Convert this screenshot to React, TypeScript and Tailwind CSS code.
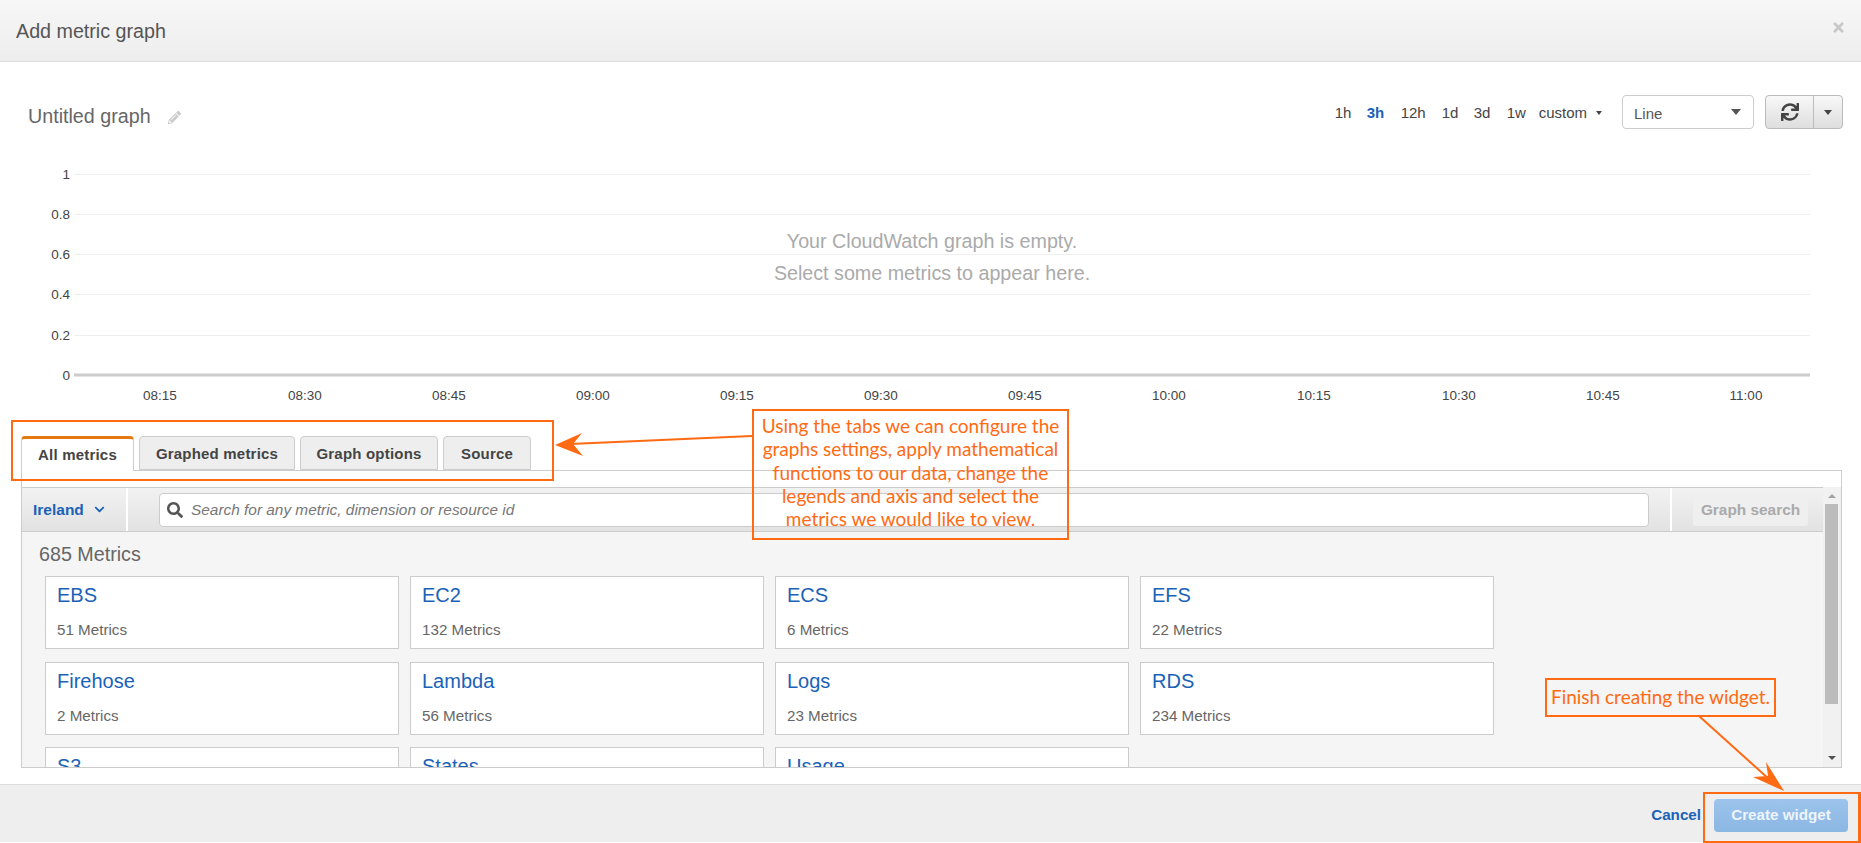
import { FaChevronDown, FaPencilAlt, FaSearch, FaSync, FaTimes } from "react-icons/fa";

const yLabels = [
  { label: "1", y: 174 },
  { label: "0.8", y: 214 },
  { label: "0.6", y: 254 },
  { label: "0.4", y: 294 },
  { label: "0.2", y: 335 },
];

const xLabels = [
  { label: "08:15", x: 160 },
  { label: "08:30", x: 305 },
  { label: "08:45", x: 449 },
  { label: "09:00", x: 593 },
  { label: "09:15", x: 737 },
  { label: "09:30", x: 881 },
  { label: "09:45", x: 1025 },
  { label: "10:00", x: 1169 },
  { label: "10:15", x: 1314 },
  { label: "10:30", x: 1459 },
  { label: "10:45", x: 1603 },
  { label: "11:00", x: 1746 },
];

const ranges = [
  { label: "1h", cls: "w-[32px]" },
  { label: "3h", cls: "w-[34px] font-bold text-[#1a62b8]" },
  { label: "12h", cls: "w-[41px]" },
  { label: "1d", cls: "w-[32px]" },
  { label: "3d", cls: "w-[33px]" },
  { label: "1w", cls: "w-[32px]" },
];

const tabs = [
  { label: "All metrics", cls: "w-[113px] h-[35px] bg-white border-[#ccc] border-b-0 border-t-[3px] border-t-[#e47911] -mb-px" },
  { label: "Graphed metrics", cls: "w-[156px] h-[34px] pt-[2px] bg-[#eee] border-[#ccc]" },
  { label: "Graph options", cls: "w-[138px] h-[34px] pt-[2px] bg-[#eee] border-[#ccc]" },
  { label: "Source", cls: "w-[88px] h-[34px] pt-[2px] bg-[#eee] border-[#ccc]" },
];

const cards = [
  { name: "EBS", count: "51 Metrics" },
  { name: "EC2", count: "132 Metrics" },
  { name: "ECS", count: "6 Metrics" },
  { name: "EFS", count: "22 Metrics" },
  { name: "Firehose", count: "2 Metrics" },
  { name: "Lambda", count: "56 Metrics" },
  { name: "Logs", count: "23 Metrics" },
  { name: "RDS", count: "234 Metrics" },
  { name: "S3", count: "9 Metrics" },
  { name: "States", count: "14 Metrics" },
  { name: "Usage", count: "8 Metrics" },
];

function Chart() {
  return (
    <svg width="1861" height="261" viewBox="0 150 1861 261" className="block">
      {yLabels.map((t) => (
        <g key={t.label}>
          <line x1="74" x2="1810" y1={t.y + 0.5} y2={t.y + 0.5} stroke="#eeeeee" />
          <text x="70" y={t.y + 5} textAnchor="end" fontSize="13.5" fill="#444">
            {t.label}
          </text>
        </g>
      ))}
      <line x1="74" x2="1810" y1="375" y2="375" stroke="#cccccc" strokeWidth="3" />
      <text x="70" y="380" textAnchor="end" fontSize="13.5" fill="#444">
        0
      </text>
      {xLabels.map((t) => (
        <text key={t.label} x={t.x} y="400" textAnchor="middle" fontSize="13.5" fill="#444">
          {t.label}
        </text>
      ))}
      <text x="932" y="248" textAnchor="middle" fontSize="19.7" fill="#aaaaaa">
        Your CloudWatch graph is empty.
      </text>
      <text x="932" y="280" textAnchor="middle" fontSize="19.7" fill="#aaaaaa">
        Select some metrics to appear here.
      </text>
    </svg>
  );
}

function Annotations() {
  return (
    <>
      <div className="absolute left-[11px] top-[420px] w-[543px] h-[61px] border-2 border-[#ff6a13]" />
      <div className="absolute left-[752px] top-[409px] w-[317px] h-[131px] border-2 border-[#ff6a13] text-center text-[#ff6a13] text-[19px] leading-[23.3px] font-['Lato',sans-serif] pt-[3px] whitespace-nowrap">
        Using the tabs we can configure the
        <br />
        graphs settings, apply mathematical
        <br />
        functions to our data, change the
        <br />
        legends and axis and select the
        <br />
        metrics we would like to view.
      </div>
      <div className="absolute left-[1545px] top-[678px] w-[231px] h-[39px] border-2 border-[#ff6a13] text-center text-[#ff6a13] text-[19px] leading-[33px] font-['Lato',sans-serif] whitespace-nowrap">
        Finish creating the widget.
      </div>
      <div className="absolute left-[1703px] top-[792px] w-[158px] h-[51px] border-2 border-r-[3px] border-[#ff6a13]" />
      <svg width="1861" height="843" className="absolute left-0 top-0 pointer-events-none">
        <line x1="752" y1="436" x2="570" y2="444" stroke="#ff6a13" strokeWidth="2" />
        <polygon points="555,445 582,433 573,444 583,456" fill="#ff6a13" />
        <line x1="1699" y1="716" x2="1770" y2="780" stroke="#ff6a13" strokeWidth="2" />
        <polygon points="1784,791 1753,777 1768,776 1766,762" fill="#ff6a13" />
      </svg>
    </>
  );
}

export default function App() {
  return (
    <div className="relative w-[1861px] h-[843px] overflow-hidden bg-white font-['Liberation_Sans',Arial,sans-serif] text-[#444]">
      {/* header */}
      <div className="h-[62px] flex items-center justify-between pl-4 pr-[15px] pt-[2px] border-b border-[#ddd] bg-gradient-to-b from-[#f7f7f7] to-[#ededed]">
        <h1 className="text-[19.7px] text-[#555]">Add metric graph</h1>
        <FaTimes className="text-[#c8c8c8] text-[15px] mb-[8px]" />
      </div>

      {/* graph title + range controls */}
      <div className="h-[88px] flex items-start justify-between pl-[28px] pr-[18px] pt-[32px]">
        <div className="flex items-center mt-[10px]">
          <span className="text-[19.7px] leading-[24px] text-[#666]">Untitled graph</span>
          <FaPencilAlt className="ml-[17px] text-[#ccc] text-[13px] mt-[2px]" />
        </div>
        <div className="flex items-center">
          <div className="flex items-center text-[15px] text-[#444] h-[34px] mt-[2px] mr-[1px]">
            {ranges.map((r) => (
              <span key={r.label} className={r.cls}>
                {r.label}
              </span>
            ))}
            <span>custom</span>
            <span className="ml-[9px] w-0 h-0 border-x-[3.5px] border-x-transparent border-t-[4px] border-t-[#444]" />
          </div>
          <div className="ml-[19px] w-[132px] h-[34px] border border-[#ccc] rounded-[4px] flex items-center justify-between pl-[11px] pr-[12px] text-[15px] text-[#555]">
            <span className="mt-[4px]">Line</span>
            <span className="w-0 h-0 border-x-[5px] border-x-transparent border-t-[6px] border-t-[#555]" />
          </div>
          <div className="ml-[11px] w-[78px] h-[34px] flex border border-[#bbb] rounded-[4px] bg-gradient-to-b from-[#f8f8f8] to-[#dedede]">
            <div className="w-[48px] flex items-center justify-center border-r border-[#bbb]">
              <FaSync className="text-[#444] text-[18px]" />
            </div>
            <div className="flex-1 flex items-center justify-center">
              <span className="w-0 h-0 border-x-[4.5px] border-x-transparent border-t-[5px] border-t-[#444]" />
            </div>
          </div>
        </div>
      </div>

      <Chart />

      {/* tabs */}
      <div className="mt-[25px] ml-[21px] w-[1821px] flex items-end gap-[5px] h-[35px] border-b border-[#ccc]">
        {tabs.map((t) => (
          <div
            key={t.label}
            className={`flex items-center justify-center rounded-t-[4px] border text-[15px] font-bold text-[#444] tracking-[0.2px] ${t.cls}`}
          >
            {t.label}
          </div>
        ))}
      </div>

      {/* panel */}
      <div className="ml-[21px] w-[1821px] h-[297px] border-x border-b border-[#ccc] pt-[16px] flex">
        <div className="flex-1 min-w-0 flex flex-col">
          <div className="h-[45px] flex items-center border-y border-[#ccc] bg-gradient-to-b from-[#f2f2f2] to-[#e2e2e2]">
            <div className="w-[106px] h-full border-r-2 border-white flex items-center pl-[11px] text-[#1a62b8] text-[15.5px] font-bold">
              Ireland
              <FaChevronDown className="ml-[10px] text-[11px]" />
            </div>
            <div className="ml-[31px] w-[1490px] h-[34px] bg-white border border-[#ccc] rounded-[4px] flex items-center pl-[7px] text-[15.4px]">
              <FaSearch className="text-[#555] text-[16px]" />
              <span className="ml-[8px] italic text-[#777]">Search for any metric, dimension or resource id</span>
            </div>
            <div className="ml-[21px] h-full border-l-2 border-white pl-[21px] flex items-center">
              <div className="w-[115px] h-[32px] rounded-[3px] bg-[#efefef] flex items-center justify-center text-[15.4px] font-bold text-[#aaa]">
                Graph search
              </div>
            </div>
          </div>
          <div className="flex-1 min-h-0 overflow-hidden bg-[#f5f5f5] pl-[23px]">
            <div className="text-[19.7px] leading-[24px] text-[#666] -ml-[9px] pl-[3px] pt-[10px] pb-[10px]">685 Metrics</div>
            <div className="grid grid-cols-[repeat(4,354px)] auto-rows-[73px] gap-x-[11px] gap-y-[12.5px]">
              {cards.map((c) => (
                <div key={c.name} className="bg-white border border-[#ccc] pl-[11px] pt-[6px]">
                  <div className="text-[20px] leading-[24px] text-[#1a62b8]">{c.name}</div>
                  <div className="mt-[13px] text-[15.2px] leading-[20px] text-[#666]">{c.count}</div>
                </div>
              ))}
            </div>
          </div>
        </div>
        {/* scrollbar */}
        <div className="w-[18px] bg-[#f1f1f1] flex flex-col items-center justify-between py-[7px] relative">
          <span className="w-0 h-0 border-x-[4px] border-x-transparent border-b-[4px] border-b-[#a3a3a3]" />
          <span className="absolute left-[2px] top-[17px] w-[13px] h-[200px] bg-[#bcbcbc]" />
          <span className="w-0 h-0 border-x-[4px] border-x-transparent border-t-[4px] border-t-[#505050]" />
        </div>
      </div>

      {/* footer */}
      <div className="mt-[16px] h-[58px] bg-[#eeeeee] border-t border-[#ddd] flex items-center justify-end pr-[13px] pt-[3px]">
        <span className="text-[15.2px] font-bold text-[#1a62b8] mr-[13px]">Cancel</span>
        <div className="w-[134px] h-[33px] rounded-[4px] bg-gradient-to-b from-[#9cc4ec] to-[#8bb7e3] flex items-center justify-center text-[15.2px] font-bold text-[#eef4fb]">
          Create widget
        </div>
      </div>

      <Annotations />
    </div>
  );
}
